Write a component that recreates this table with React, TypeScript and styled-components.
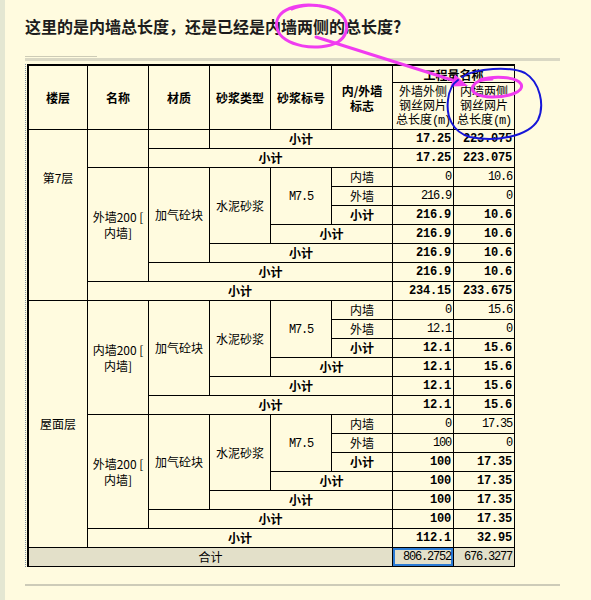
import React from "react";
import styled, { createGlobalStyle } from "styled-components";

const GlobalStyle = createGlobalStyle`
  html, body {
    margin: 0;
    padding: 0;
    background: #fffbdf;
  }
`;

const Page = styled.div`
  position: relative;
  display: flex;
  width: 591px;
  min-height: 600px;
  overflow: hidden;
`;

const SideStrip = styled.div`
  width: 5px;
  flex: none;
  background: #e4e7d2;
`;

const Main = styled.div`
  flex: 1;
  display: flex;
  flex-direction: column;
  padding-left: 20px;
`;

const Title = styled.h1`
  margin: 15px 0 0 0;
  font-family: "Noto Sans CJK SC", "Noto Sans", sans-serif;
  font-size: 16px;
  line-height: 22px;
  font-weight: 700;
  color: #1c1c1c;
  white-space: nowrap;
`;

const Rule = styled.div<{ $w: number; $h: number; $mt: number; $c: string }>`
  width: ${(p) => p.$w}px;
  height: ${(p) => p.$h}px;
  margin-top: ${(p) => p.$mt}px;
  background: ${(p) => p.$c};
`;

const TableFrame = styled.div`
  margin-top: 3px;
  padding-left: 1px;
  border-left: 1px dotted #7f93a6;
  align-self: flex-start;
`;

const Grid = styled.table`
  border-collapse: separate;
  border-spacing: 0;
  table-layout: fixed;
  width: 488px;
  border-left: 2px solid #000;
  border-top: 2px solid #000;
  font-size: 12px;
  color: #000;
`;

const Col = styled.col<{ $w: number }>`
  width: ${(p) => p.$w}px;
`;

const HeadCell = styled.th<{ $sub?: boolean; $h?: number }>`
  box-sizing: border-box;
  padding: 0;
  height: ${(p) => p.$h ?? 17}px;
  border-right: 1px solid #000;
  border-bottom: 1px solid #000;
  font-family: "Noto Sans CJK SC", sans-serif;
  font-size: 12px;
  font-weight: ${(p) => (p.$sub ? 400 : 700)};
  line-height: ${(p) => (p.$sub ? 14 : 15)}px;
  text-align: center;
  vertical-align: middle;
  white-space: nowrap;
  overflow: hidden;
`;

const Unit = styled.span`
  font-family: "Liberation Mono", monospace;
  letter-spacing: -1.2px;
`;

const Cell = styled.td<{ $b?: boolean; $num?: boolean; $sel?: boolean; $top?: number }>`
  box-sizing: border-box;
  padding: ${(p) => (p.$top ? `${p.$top}px 0 0 0` : p.$num ? "0 2px 0 0" : "0")};
  height: 19px;
  border-right: 1px solid #000;
  border-bottom: 1px solid #000;
  font-family: ${(p) =>
    p.$num ? '"Liberation Mono", monospace' : '"Noto Sans CJK SC", sans-serif'};
  font-size: 12px;
  font-weight: ${(p) => (p.$b ? 700 : 400)};
  letter-spacing: ${(p) => (p.$num ? (p.$b ? "-0.2px" : "-1.2px") : "0")};
  line-height: 16px;
  text-align: ${(p) => (p.$num ? "right" : "center")};
  vertical-align: ${(p) => (p.$top ? "top" : "middle")};
  white-space: nowrap;
  box-shadow: ${(p) => (p.$sel ? "inset 0 0 0 2px #2b7bd4" : "none")};
`;

const Code = styled.span`
  font-family: "Liberation Mono", monospace;
  letter-spacing: -1.2px;
`;

const TotalRow = styled.tr`
  background: #e3e0c9;
`;

const Overlay = styled.svg`
  position: absolute;
  left: 0;
  top: 0;
  width: 591px;
  height: 600px;
  pointer-events: none;
`;

type Vals = [string, string];

const Nums = ({ v, b }: { v: Vals; b?: boolean }) => (
  <>
    <Cell $num $b={b}>{v[0]}</Cell>
    <Cell $num $b={b}>{v[1]}</Cell>
  </>
);

const Group = ({
  lead,
  name,
  vals,
}: {
  lead?: React.ReactNode;
  name: React.ReactNode;
  vals: { inner: Vals; outer: Vals; sum: Vals };
}) => (
  <>
    <tr>
      {lead}
      <Cell rowSpan={6}>{name}</Cell>
      <Cell rowSpan={5}>加气砼块</Cell>
      <Cell rowSpan={4}>水泥砂浆</Cell>
      <Cell rowSpan={3}>
        <Code>M7.5</Code>
      </Cell>
      <Cell>内墙</Cell>
      <Nums v={vals.inner} />
    </tr>
    <tr>
      <Cell>外墙</Cell>
      <Nums v={vals.outer} />
    </tr>
    <tr>
      <Cell $b>小计</Cell>
      <Nums v={vals.sum} b />
    </tr>
    <tr>
      <Cell $b colSpan={2}>小计</Cell>
      <Nums v={vals.sum} b />
    </tr>
    <tr>
      <Cell $b colSpan={3}>小计</Cell>
      <Nums v={vals.sum} b />
    </tr>
    <tr>
      <Cell $b colSpan={4}>小计</Cell>
      <Nums v={vals.sum} b />
    </tr>
  </>
);

export default function App() {
  return (
    <>
      <GlobalStyle />
      <Page>
        <SideStrip />
        <Main>
          <Title>这里的是内墙总长度，还是已经是内墙两侧的总长度?</Title>
          <Rule $w={72} $h={1} $mt={19} $c="#cdcbb6" />
          <Rule $w={535} $h={3} $mt={1} $c="#dad8c4" />
          <TableFrame>
            <Grid>
              <colgroup>
                <Col $w={59} />
                <Col $w={61} />
                <Col $w={61} />
                <Col $w={61} />
                <Col $w={61} />
                <Col $w={61} />
                <Col $w={61} />
                <Col $w={61} />
              </colgroup>
              <thead>
                <tr>
                  <HeadCell rowSpan={2}>楼层</HeadCell>
                  <HeadCell rowSpan={2}>名称</HeadCell>
                  <HeadCell rowSpan={2}>材质</HeadCell>
                  <HeadCell rowSpan={2}>砂浆类型</HeadCell>
                  <HeadCell rowSpan={2}>砂浆标号</HeadCell>
                  <HeadCell rowSpan={2}>
                    内/外墙
                    <br />
                    标志
                  </HeadCell>
                  <HeadCell colSpan={2}>工程量名称</HeadCell>
                </tr>
                <tr>
                  <HeadCell $sub $h={47}>
                    外墙外侧
                    <br />
                    钢丝网片
                    <br />
                    总长度<Unit>(m)</Unit>
                  </HeadCell>
                  <HeadCell $sub $h={47}>
                    内墙两侧
                    <br />
                    钢丝网片
                    <br />
                    总长度<Unit>(m)</Unit>
                  </HeadCell>
                </tr>
              </thead>
              <tbody>
                <tr>
                  <Cell rowSpan={9} $top={40}>第7层</Cell>
                  <Cell rowSpan={2} />
                  <Cell />
                  <Cell $b colSpan={3}>小计</Cell>
                  <Nums v={["17.25", "223.075"]} b />
                </tr>
                <tr>
                  <Cell $b colSpan={4}>小计</Cell>
                  <Nums v={["17.25", "223.075"]} b />
                </tr>
                <Group
                  name={
                    <>
                      外墙200 [<br />
                      内墙]
                    </>
                  }
                  vals={{
                    inner: ["0", "10.6"],
                    outer: ["216.9", "0"],
                    sum: ["216.9", "10.6"],
                  }}
                />
                <tr>
                  <Cell $b colSpan={5}>小计</Cell>
                  <Nums v={["234.15", "233.675"]} b />
                </tr>
                <Group
                  lead={<Cell rowSpan={13}>屋面层</Cell>}
                  name={
                    <>
                      内墙200 [<br />
                      内墙]
                    </>
                  }
                  vals={{
                    inner: ["0", "15.6"],
                    outer: ["12.1", "0"],
                    sum: ["12.1", "15.6"],
                  }}
                />
                <Group
                  name={
                    <>
                      外墙200 [<br />
                      内墙]
                    </>
                  }
                  vals={{
                    inner: ["0", "17.35"],
                    outer: ["100", "0"],
                    sum: ["100", "17.35"],
                  }}
                />
                <tr>
                  <Cell $b colSpan={5}>小计</Cell>
                  <Nums v={["112.1", "32.95"]} b />
                </tr>
                <TotalRow>
                  <Cell colSpan={6}>合计</Cell>
                  <Cell $num $sel>806.2752</Cell>
                  <Cell $num>676.3277</Cell>
                </TotalRow>
              </tbody>
            </Grid>
          </TableFrame>
          <Rule $w={535} $h={2} $mt={17} $c="#cdcbb8" />
        </Main>
        <Overlay viewBox="0 0 591 600">
          <g fill="none" stroke="#f03cf0" strokeWidth={3} strokeLinecap="round">
            <path d="M 326 7 C 298 1, 273 10, 277 28 C 281 47, 320 52, 338 42 C 352 33, 350 13, 326 7 C 316 4, 300 5, 292 9" />
            <path d="M 316 37 L 452 80" />
            <path d="M 480 80 C 492 76, 516 76, 521 84 C 525 92, 508 97, 492 97 C 478 97, 470 92, 473 86 C 476 81, 484 79, 492 79" />
          </g>
          <polygon points="468,86 450.5,86.5 455,74.5" fill="#f03cf0" />
          <path
            d="M 462 77 C 476 68, 510 66, 525 73 C 540 82, 545 105, 538 120 C 528 137, 495 142, 470 137 C 452 132, 446 116, 448 100 C 449 90, 452 84, 458 80"
            fill="none"
            stroke="#1616d8"
            strokeWidth={2}
            strokeLinecap="round"
          />
        </Overlay>
      </Page>
    </>
  );
}
